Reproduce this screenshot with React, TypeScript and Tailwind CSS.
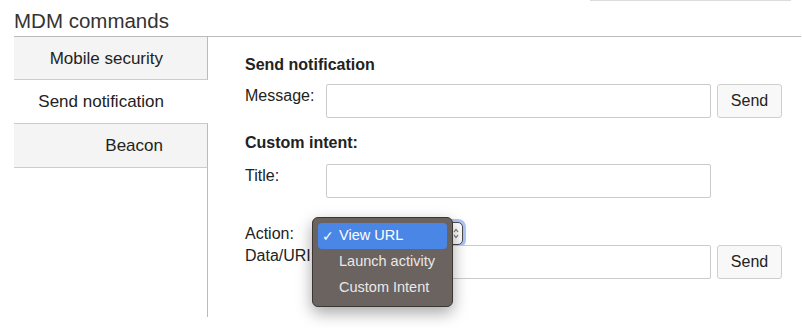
import clsx from "clsx";

const tabs = [
  { label: "Mobile security", active: false, className: "h-[43px] border-b pt-[2px]" },
  { label: "Send notification", active: true, className: "h-[43px] pt-px" },
  { label: "Beacon", active: false, className: "h-[45px] border-y" },
];

function Field({ withSend }: { withSend?: boolean }) {
  return (
    <div className="flex items-start">
      <div className="h-[34px] w-[385px] rounded-[2px] border border-[#cbcbcb] bg-white" />
      {withSend && (
        <button className="ml-[6px] h-[34px] w-[65px] rounded-[3px] border border-[#cfcfcf] bg-[#f8f8f8] text-[16px] leading-5 text-[#222]">
          Send
        </button>
      )}
    </div>
  );
}

function Row(props: { label: string; labelClass?: string; children: React.ReactNode; className?: string }) {
  return (
    <div className={clsx("flex items-start", props.className)}>
      <div className={clsx("w-[81px] text-[16px] leading-5", props.labelClass)}>{props.label}</div>
      {props.children}
    </div>
  );
}

function ActionMenu() {
  const items = ["View URL", "Launch activity", "Custom Intent"];
  return (
    <div className="absolute left-[312px] top-[217px] w-[141px] rounded-[6px] border border-[#3a3735] bg-[#6a6360] p-[5px] shadow-[0_6px_16px_rgba(0,0,0,0.35)]">
      {items.map((item, i) => (
        <div
          key={item}
          className={clsx(
            "flex h-[26px] items-center rounded-[4px] pl-[4px] text-[14.5px]",
            i === 0 ? "bg-[#4a86e6] text-white" : "text-[#ebe8e6]",
          )}
        >
          <span className="w-[17px] text-[14px]">{i === 0 ? "✓" : ""}</span>
          {item}
        </div>
      ))}
    </div>
  );
}

export default function App() {
  return (
    <div className="relative h-[328px] w-[802px] overflow-hidden bg-white font-['Liberation_Sans',Arial,sans-serif] text-[#222]">
      <div className="ml-[590px] h-px w-[201px] bg-[#dcdcdc]" />
      <h2 className="ml-[14px] mr-px h-[36px] border-b border-[#bbbbbb] pt-[10px] text-[20.5px] leading-[20px] text-[#333]">
        MDM commands
      </h2>

      <div className="ml-[14px] flex h-[280px]">
        <div className="flex w-[194px] flex-col">
          {tabs.map((tab) => (
            <div
              key={tab.label}
              className={clsx(
                "flex items-center justify-end border-[#cccccc] pr-[44px] text-[17px]",
                tab.className,
                tab.active ? "bg-white" : "border-r bg-[#f4f4f4] border-r-[#bbbbbb]",
              )}
            >
              {tab.label}
            </div>
          ))}
          <div className="flex-1 border-r border-[#bbbbbb]" />
        </div>

        <div className="flex-1 pl-[37px]">
          <h3 className="mt-[18px] text-[16px] font-bold leading-5">Send notification</h3>
          <Row label="Message:" labelClass="pt-[2px]" className="mt-[9px]">
            <Field withSend />
          </Row>

          <h3 className="mt-[15px] text-[16px] font-bold leading-5">Custom intent:</h3>
          <Row label="Title:" labelClass="pt-[2px]" className="mt-[11px]">
            <Field />
          </Row>

          <Row label="Action:" labelClass="pt-[2px]" className="mt-[24px]">
            <div className="flex h-[23px] w-[137px] items-center justify-end rounded-[5px] border border-[#4a4a4a] bg-white pr-[3px] shadow-[0_0_0_3px_rgba(120,160,240,0.6)]">
              <svg width="6" height="11" viewBox="0 0 6 11" className="text-[#777]">
                <path d="M1 4 L3 1.5 L5 4 M1 7 L3 9.5 L5 7" fill="none" stroke="currentColor" strokeWidth="1.2" />
              </svg>
            </div>
          </Row>
          <Row label="Data/URI:" labelClass="pt-[1px]">
            <Field withSend />
          </Row>
        </div>
      </div>

      <ActionMenu />
    </div>
  );
}
